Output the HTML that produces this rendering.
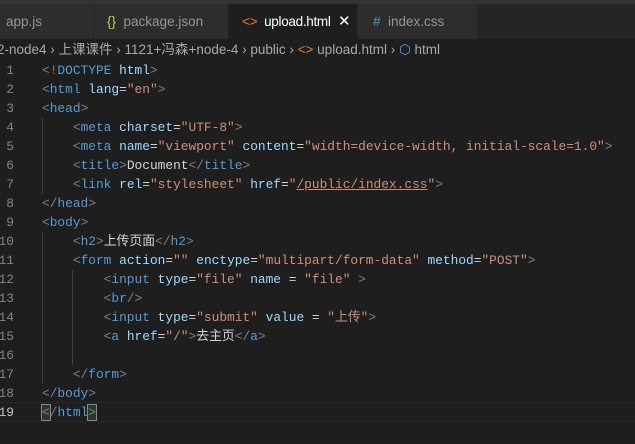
<!DOCTYPE html>
<html><head><meta charset="utf-8"><style>
*{margin:0;padding:0;box-sizing:border-box}
body{width:635px;height:444px;background:#1e1e1e;overflow:hidden;position:relative;font-family:"Liberation Sans","Noto Sans CJK SC",sans-serif}
.top{position:absolute;left:0;top:0;width:635px;height:4px;background:#333}
.tabs{position:absolute;left:0;top:4px;width:635px;height:35px;background:#252526}
.tab{position:absolute;top:0;height:35px;background:#2d2d2d;color:#969696;font-size:13.5px;line-height:35px;white-space:nowrap;overflow:hidden}
.crumb{position:absolute;left:0;top:39px;width:635px;height:22px;color:#a9a9a9;font-size:13.5px;line-height:22px;white-space:nowrap}
.code{position:absolute;left:0;top:61px;font-family:"Liberation Mono","Noto Sans CJK SC",monospace;font-size:12.85px}
.ln{position:absolute;left:-20px;width:34px;text-align:right;color:#858585;height:19px;line-height:19px}
.l{position:absolute;left:42px;height:19px;line-height:19px;white-space:pre;color:#d4d4d4}
.p{color:#808080}.t{color:#569cd6}.a{color:#9cdcfe}.s{color:#ce9178}
.guide{position:absolute;width:1px;background:#404040}
</style></head><body>
<div class="top"></div>
<div class="tabs">
<div class="tab" style="left:0;width:93px;padding-left:6px">app.js</div>
<div class="tab" style="left:94px;width:134px;padding-left:13px"><span style="color:#cbcb41">{}</span>&nbsp; package.json</div>
<div class="tab" style="left:228px;width:129px;background:#1e1e1e;color:#fff;padding-left:14px;letter-spacing:-0.3px"><span style="color:#e37933">&lt;&gt;</span>&nbsp; upload.html<span style="position:absolute;left:110px;top:0;font-size:15px">✕</span></div>
<div class="tab" style="left:358px;width:119px;padding-left:15px"><span style="color:#519aba">#</span>&nbsp; index.css</div>
</div>
<div class="crumb" style="left:-3px">2-node4 › 上课课件 › 1121+冯森+node-4 › public › <span style="color:#e37933">&lt;&gt;</span> upload.html › <span style="color:#4fa3f7">⬡</span> html</div>
<div class="guide" style="left:42px;top:118px;height:76px"></div>
<div class="guide" style="left:42px;top:232px;height:152px"></div>
<div class="guide" style="left:72px;top:270px;height:95px"></div>
<div style="position:absolute;left:0;top:402px;width:635px;height:20px;border-top:1px solid #282828;border-bottom:1px solid #282828"></div>
<div class="code">
<div class="ln" style="top:0">1</div><div class="l" style="top:0"><span class="p">&lt;!</span><span class="t">DOCTYPE</span> <span class="a">html</span><span class="p">&gt;</span></div>
<div class="ln" style="top:19px">2</div><div class="l" style="top:19px"><span class="p">&lt;</span><span class="t">html</span> <span class="a">lang</span>=<span class="s">"en"</span><span class="p">&gt;</span></div>
<div class="ln" style="top:38px">3</div><div class="l" style="top:38px"><span class="p">&lt;</span><span class="t">head</span><span class="p">&gt;</span></div>
<div class="ln" style="top:57px">4</div><div class="l" style="top:57px">    <span class="p">&lt;</span><span class="t">meta</span> <span class="a">charset</span>=<span class="s">"UTF-8"</span><span class="p">&gt;</span></div>
<div class="ln" style="top:76px">5</div><div class="l" style="top:76px">    <span class="p">&lt;</span><span class="t">meta</span> <span class="a">name</span>=<span class="s">"viewport"</span> <span class="a">content</span>=<span class="s">"width=device-width, initial-scale=1.0"</span><span class="p">&gt;</span></div>
<div class="ln" style="top:95px">6</div><div class="l" style="top:95px">    <span class="p">&lt;</span><span class="t">title</span><span class="p">&gt;</span>Document<span class="p">&lt;/</span><span class="t">title</span><span class="p">&gt;</span></div>
<div class="ln" style="top:114px">7</div><div class="l" style="top:114px">    <span class="p">&lt;</span><span class="t">link</span> <span class="a">rel</span>=<span class="s">"stylesheet"</span> <span class="a">href</span>=<span class="s">"<u>/public/index.css</u>"</span><span class="p">&gt;</span></div>
<div class="ln" style="top:133px">8</div><div class="l" style="top:133px"><span class="p">&lt;/</span><span class="t">head</span><span class="p">&gt;</span></div>
<div class="ln" style="top:152px">9</div><div class="l" style="top:152px"><span class="p">&lt;</span><span class="t">body</span><span class="p">&gt;</span></div>
<div class="ln" style="top:171px">10</div><div class="l" style="top:171px">    <span class="p">&lt;</span><span class="t">h2</span><span class="p">&gt;</span>上传页面<span class="p">&lt;/</span><span class="t">h2</span><span class="p">&gt;</span></div>
<div class="ln" style="top:190px">11</div><div class="l" style="top:190px">    <span class="p">&lt;</span><span class="t">form</span> <span class="a">action</span>=<span class="s">""</span> <span class="a">enctype</span>=<span class="s">"multipart/form-data"</span> <span class="a">method</span>=<span class="s">"POST"</span><span class="p">&gt;</span></div>
<div class="ln" style="top:209px">12</div><div class="l" style="top:209px">        <span class="p">&lt;</span><span class="t">input</span> <span class="a">type</span>=<span class="s">"file"</span> <span class="a">name</span> = <span class="s">"file"</span> <span class="p">&gt;</span></div>
<div class="ln" style="top:228px">13</div><div class="l" style="top:228px">        <span class="p">&lt;</span><span class="t">br</span><span class="p">/&gt;</span></div>
<div class="ln" style="top:247px">14</div><div class="l" style="top:247px">        <span class="p">&lt;</span><span class="t">input</span> <span class="a">type</span>=<span class="s">"submit"</span> <span class="a">value</span> = <span class="s">"上传"</span><span class="p">&gt;</span></div>
<div class="ln" style="top:266px">15</div><div class="l" style="top:266px">        <span class="p">&lt;</span><span class="t">a</span> <span class="a">href</span>=<span class="s">"/"</span><span class="p">&gt;</span>去主页<span class="p">&lt;/</span><span class="t">a</span><span class="p">&gt;</span></div>
<div class="ln" style="top:285px">16</div>
<div class="ln" style="top:304px">17</div><div class="l" style="top:304px">    <span class="p">&lt;/</span><span class="t">form</span><span class="p">&gt;</span></div>
<div class="ln" style="top:323px">18</div><div class="l" style="top:323px"><span class="p">&lt;/</span><span class="t">body</span><span class="p">&gt;</span></div>
<div class="ln" style="top:342px;color:#c6c6c6">19</div><div class="l" style="top:342px"><span class="p" style="outline:1px solid #888;background:#2a3a2a">&lt;</span><span class="p">/</span><span class="t">html</span><span class="p" style="outline:1px solid #888;background:#2a3a2a">&gt;</span></div>
</div>
</body></html>
